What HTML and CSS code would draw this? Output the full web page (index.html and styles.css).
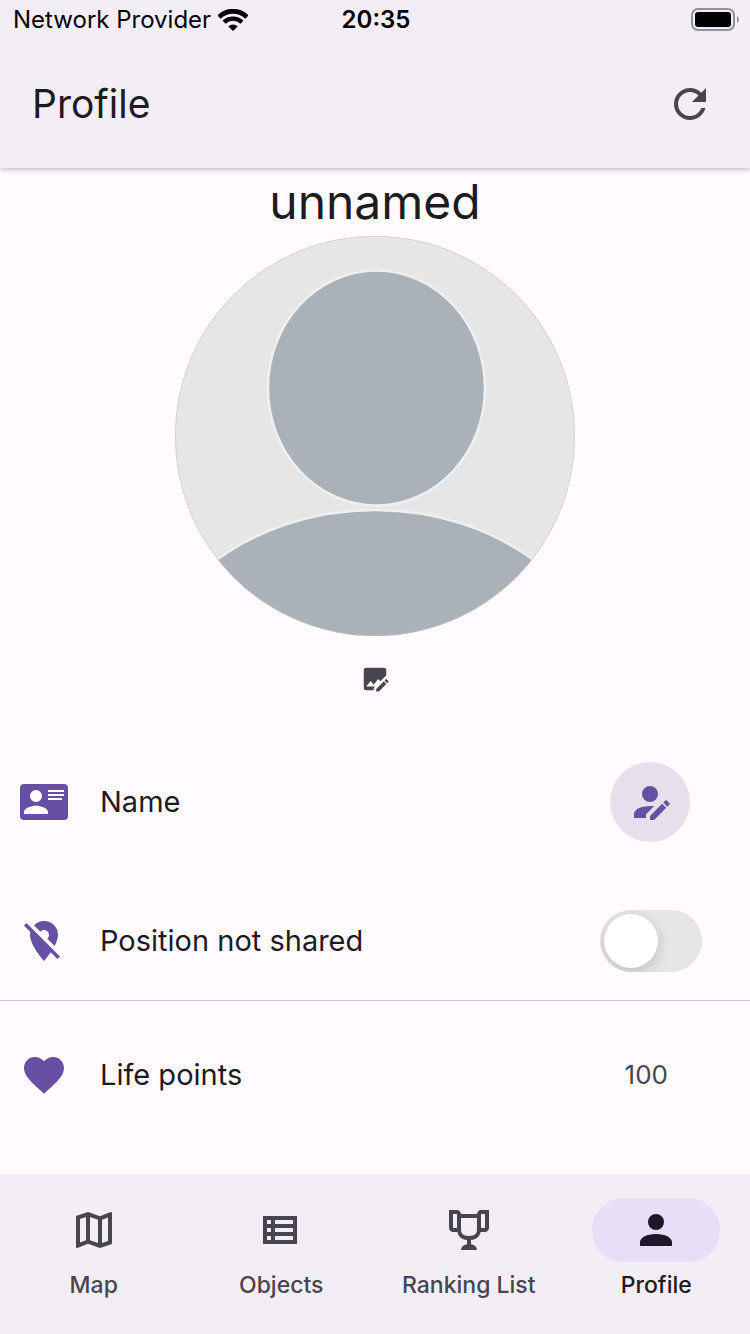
FILE: index.html
```html
<!DOCTYPE html>
<html lang="en">
<head>
<meta charset="utf-8">
<meta name="viewport" content="width=device-width, initial-scale=1">
<title>Profile</title>
<link rel="stylesheet" href="styles.css">
</head>
<body>
<header class="top">
  <div class="status">
    <div class="carrier">
      <span>Network Provider</span>
      <svg class="wifi" viewBox="0 0 30 22" aria-hidden="true"><path d="M1 8A20 20 0 0 1 29 8" stroke-width="4.8"/><path d="M6 13.2A13 13 0 0 1 24 13.2" stroke-width="4.4"/><path class="dot" d="M15 22L10.3 17.4A7 7 0 0 1 19.7 17.4Z"/></svg>
    </div>
    <time class="clock">20:35</time>
    <svg class="battery" viewBox="0 0 48 24" aria-hidden="true"><rect class="shell" x="1" y="1" width="42" height="21" rx="6"/><rect x="4" y="4" width="36" height="15" rx="3"/><path class="cap" d="M46 8Q50 11.500 46 15Z"/></svg>
  </div>
  <div class="appbar">
    <h1 class="title">Profile</h1>
    <button class="icon-button" type="button" aria-label="Refresh"><svg class="icon" viewBox="0 0 24 24"><path d="M17.65,6.35C16.2,4.9 14.21,4 12,4A8,8 0 0,0 4,12A8,8 0 0,0 12,20C15.73,20 18.84,17.45 19.73,14H17.65C16.83,16.33 14.61,18 12,18A6,6 0 0,1 6,12A6,6 0 0,1 12,6C13.66,6 15.14,6.69 16.22,7.78L13,11H20V4L17.65,6.35Z"/></svg></button>
  </div>
</header>
<main class="content">
  <section class="person">
    <h2 class="person-name">unnamed</h2>
    <svg class="avatar" viewBox="0 0 400 400" role="img" aria-label="Profile picture">
      <defs><clipPath id="round"><circle cx="200" cy="200" r="200"/></clipPath></defs>
      <g clip-path="url(#round)">
        <rect width="400" height="400" fill="#e6e6e6"/>
        <g fill="#aab1b7" stroke="#edf0f2" stroke-width="2.500">
          <ellipse cx="201.500" cy="152" rx="108.500" ry="117.500"/>
          <ellipse cx="200" cy="475" rx="240" ry="201"/>
        </g>
      </g>
      <circle class="avatar-ring" cx="200" cy="200" r="199.700"/>
    </svg>
    <button class="icon-button edit-photo" type="button" aria-label="Edit picture"><svg class="icon-small" viewBox="0 0 24 24"><path d="M22.7 14.3L21.700 15.300L19.650 13.250L20.650 12.250C20.860 12.050 21.210 12.050 21.420 12.250L22.700 13.530C22.900 13.740 22.900 14.090 22.700 14.300M13 19.940V22H15.060L21.120 15.930L19.070 13.880L13 19.940M5 3A2 2 0 0 0 3 5V19A2 2 0 0 0 5 21H11V19.100L12.100 18H5L8.500 13.500L11 16.500L14.500 12L16.300 13.800L21 9.100V5A2 2 0 0 0 19 3Z"/></svg></button>
  </section>
  <ul class="list">
    <li class="row row-name">
      <svg class="icon accent" viewBox="0 0 24 24" aria-hidden="true"><path fill-rule="evenodd" d="M2 3H22A2 2 0 0 1 24 5V19A2 2 0 0 1 22 21H2A2 2 0 0 1 0 19V5A2 2 0 0 1 2 3ZM14 6V7H22V6ZM14 8V9H22V8ZM14 10V11H21V10ZM8 6A3 3 0 0 0 8 12A3 3 0 0 0 8 6ZM14 18V17C14 15 10 13.900 8 13.900S2 15 2 17V18Z"/></svg>
      <span class="label">Name</span>
      <button class="round-button" type="button" aria-label="Edit name"><svg class="icon accent" viewBox="0 0 24 24"><path d="M21.7,13.35L20.7,14.35L18.65,12.3L19.65,11.3C19.86,11.09 20.21,11.09 20.42,11.3L21.7,12.58C21.91,12.79 21.91,13.14 21.7,13.35M12,18.94L18.06,12.88L20.11,14.93L14.06,21H12V18.94M12,14C7.58,14 4,15.79 4,18V20H10V18.11L14,14.11C13.34,14.03 12.67,14 12,14M12,4A4,4 0 0,0 8,8A4,4 0 0,0 12,12A4,4 0 0,0 16,8A4,4 0 0,0 12,4Z"/></svg></button>
    </li>
    <li class="row row-position">
      <svg class="icon accent" viewBox="0 0 24 24" aria-hidden="true"><path d="M16.37,16.1L11.75,11.47L11.64,11.36L3.27,3L2,4.27L5.18,7.45C5.06,7.95 5,8.46 5,9C5,14.25 12,22 12,22C12,22 13.67,20.15 15.37,17.65L18.73,21L20,19.72M12,6.5A2.5,2.5 0 0,1 14.5,9C14.5,9.73 14.17,10.39 13.67,10.85L17.3,14.5C18.28,12.62 19,10.68 19,9A7,7 0 0,0 12,2C10,2 8.24,2.82 6.96,4.14L10.15,7.33C10.61,6.82 11.26,6.5 12,6.5Z"/></svg>
      <label class="label" for="share">Position not shared</label>
      <input class="switch" id="share" type="checkbox" role="switch">
    </li>
    <li class="row row-life">
      <svg class="icon accent" viewBox="0 0 24 24" aria-hidden="true"><path d="M12,21.35L10.55,20.03C5.4,15.36 2,12.27 2,8.5C2,5.41 4.42,3 7.5,3C9.24,3 10.91,3.81 12,5.08C13.09,3.81 14.76,3 16.5,3C19.58,3 22,5.41 22,8.5C22,12.27 18.6,15.36 13.45,20.03L12,21.35Z"/></svg>
      <span class="label">Life points</span>
      <span class="value">100</span>
    </li>
  </ul>
</main>
<nav class="tabs">
  <a class="tab" href="#map"><span class="pill"><svg class="icon" viewBox="0 0 24 24" aria-hidden="true"><path d="M20.5,3L20.34,3.03L15,5.1L9,3L3.36,4.9C3.15,4.97 3,5.15 3,5.38V20.5A0.5,0.5 0 0,0 3.5,21L3.66,20.97L9,18.9L15,21L20.64,19.1C20.85,19.03 21,18.85 21,18.62V3.5A0.5,0.5 0 0,0 20.5,3M10,5.47L14,6.87V18.53L10,17.13V5.47M5,6.46L8,5.45V17.15L5,18.31V6.46M19,17.54L16,18.55V6.86L19,5.7V17.54Z"/></svg></span>Map</a>
  <a class="tab" href="#objects"><span class="pill"><svg class="icon" viewBox="0 0 24 24" aria-hidden="true"><path fill-rule="evenodd" d="M3 5H20V19H3ZM5 7V9H7V7ZM9 7V9H18V7ZM5 11V13H7V11ZM9 11V13H18V11ZM5 15V17H7V15ZM9 15V17H18V15Z"/></svg></span>Objects</a>
  <a class="tab" href="#ranking"><span class="pill"><svg class="icon" viewBox="0 0 24 24" aria-hidden="true"><path d="M18 2C17.1 2 16 3 16 4H8C8 3 6.9 2 6 2H2V11C2 12 3 13 4 13H6.2C6.6 15 7.9 16.7 11 17V19.08C8 19.54 8 22 8 22H16C16 22 16 19.54 13 19.08V17C16.1 16.7 17.4 15 17.8 13H20C21 13 22 12 22 11V2H18M6 11H4V4H6V11M16 11.5C16 13.43 15.42 15 12 15C8.59 15 8 13.43 8 11.5V6H16V11.5M20 11H18V4H20V11Z"/></svg></span>Ranking List</a>
  <a class="tab active" href="#profile" aria-current="page"><span class="pill"><svg class="icon" viewBox="0 0 24 24" aria-hidden="true"><path d="M12,4A4,4 0 0,1 16,8A4,4 0 0,1 12,12A4,4 0 0,1 8,8A4,4 0 0,1 12,4M12,14C16.42,14 20,15.79 20,18V20H4V18C4,15.79 7.58,14 12,14Z"/></svg></span>Profile</a>
</nav>
</body>
</html>
```
FILE: styles.css
```css
* { box-sizing: border-box; }

body {
  margin: 0;
  min-height: 100vh;
  display: flex;
  flex-direction: column;
  background: #fffbff;
  color: #1c1b1f;
  font-family: Inter, "Liberation Sans", sans-serif;
}

h1, h2, ul { margin: 0; padding: 0; font-weight: 400; }
button { border: 0; padding: 0; background: none; color: inherit; font: inherit; }
svg { display: block; fill: currentColor; }

.icon { width: 48px; height: 48px; }
.icon-small { width: 30px; height: 30px; }
.accent { color: #6750a4; }
.icon-button { color: #49454f; }

.top {
  background: #f3edf5;
  box-shadow: 0 1px 6px rgba(0, 0, 0, 0.3);
}

.status {
  display: grid;
  grid-template-columns: 1fr auto 1fr;
  align-items: center;
  height: 40px;
  padding: 0 11px 0 13px;
  color: #000;
  font-size: 24px;
  line-height: 40px;
}
.carrier { display: flex; align-items: center; gap: 7px; }
.wifi { width: 30px; height: 22px; fill: none; stroke: currentColor; }
.wifi .dot { fill: currentColor; stroke: none; }
.clock { font-weight: 600; }
.battery { width: 48px; height: 24px; justify-self: end; }
.battery .shell { fill: none; stroke: #929096; stroke-width: 2; }
.battery .cap { fill: #929096; }

.appbar {
  display: flex;
  align-items: center;
  justify-content: space-between;
  height: 128px;
  padding: 0 36px 0 32px;
}
.title { font-size: 39px; line-height: 56px; }

.content { flex: 1; }

.person { display: flex; flex-direction: column; align-items: center; }
.person-name { font-size: 48px; line-height: 68px; }
.avatar { width: 400px; max-width: 90%; }
.avatar-ring { fill: none; stroke: #c6bddb; stroke-width: 0.6; }
.edit-photo { padding: 28px; }

.list { list-style: none; }
.row {
  display: flex;
  align-items: center;
  gap: 32px;
  padding: 0 48px 0 20px;
}
.row-name { height: 160px; padding-right: 60px; }
.row-position { height: 119px; border-bottom: 1px solid #cac4d0; }
.row-life { height: 147px; padding-right: 82px; }
.label { flex: 1; font-size: 29px; line-height: 40px; }
.value { color: #49454f; font-size: 26px; line-height: 40px; }

.round-button {
  display: grid;
  place-items: center;
  width: 80px;
  height: 80px;
  border-radius: 50%;
  background: #e6dfec;
}

.switch {
  appearance: none;
  display: flex;
  width: 102px;
  height: 62px;
  margin: 0;
  padding: 4px;
  border-radius: 31px;
  background: #e7e5e8;
  overflow: hidden;
}
.switch::before {
  content: "";
  width: 54px;
  height: 54px;
  border-radius: 50%;
  background: #fff;
  box-shadow: 0 4px 14px rgba(0, 0, 0, 0.18);
}
.switch:checked { justify-content: flex-end; background: #6750a4; }

.tabs {
  display: grid;
  grid-template-columns: repeat(4, 1fr);
  height: 160px;
  padding-top: 24px;
  background: #f3edf5;
}
.tab {
  display: flex;
  flex-direction: column;
  align-items: center;
  gap: 8px;
  color: #49454f;
  font-size: 23px;
  font-weight: 500;
  line-height: 30px;
  text-decoration: none;
}
.pill {
  display: grid;
  place-items: center;
  width: 128px;
  height: 64px;
  border-radius: 32px;
}
.active { color: #1c1b1f; }
.active .pill { background: #e8def8; color: #1d192b; }
```
